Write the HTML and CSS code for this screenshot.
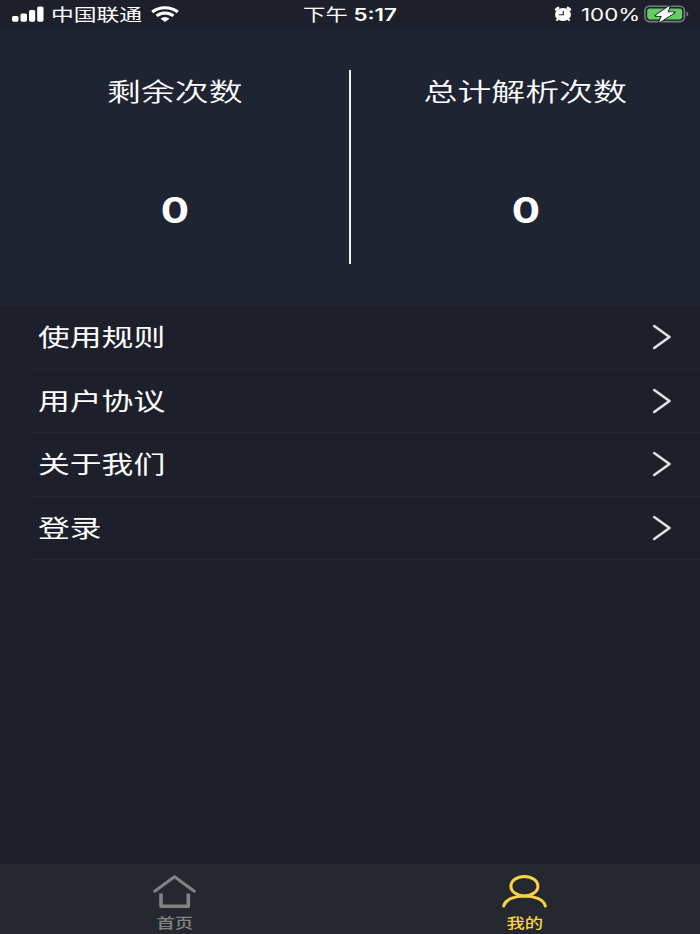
FILE: index.html
```html
<!DOCTYPE html>
<html lang="zh-CN">
<head>
  <meta charset="UTF-8">
  <meta name="viewport" content="width=device-width, initial-scale=1.0">
  <title>我的</title>
  <link rel="stylesheet" href="styles.css">
</head>
<body>
  <header class="status-bar">
    <div class="status-left">
      <svg class="signal" width="32" height="16" viewBox="0 0 32 16" fill="#fff">
        <rect x="0" y="10" width="6.5" height="5.7" rx="1.6"/>
        <rect x="8.5" y="7.5" width="6.5" height="8.2" rx="1.6"/>
        <rect x="17" y="4" width="6.2" height="11.7" rx="1.6"/>
        <rect x="25.2" y="0.5" width="6.3" height="15.2" rx="1.6"/>
      </svg>
      <span class="carrier">中国联通</span>
      <svg class="wifi" width="28" height="16" viewBox="0 0 28 16" fill="none" stroke="#fff" stroke-width="3.1">
        <path d="M1.2 6 C8.2 0.4 19.8 0.4 26.8 6"/>
        <path d="M5.6 9.9 C10.5 6 17.5 6 22.4 9.9"/>
        <path d="M9.5 12.7 Q14 9.4 18.5 12.7 L14 16 Z" fill="#fff" stroke="none"/>
      </svg>
    </div>
    <div class="time"><span class="period">下午</span> 5:17</div>
    <div class="status-right">
      <svg class="alarm" width="18" height="16" viewBox="0 0 18 16">
        <path d="M1.8 4.6 Q2.4 2.2 5.2 1.8 M16.2 4.6 Q15.6 2.2 12.8 1.8" fill="none" stroke="#fff" stroke-width="2.6"/>
        <path d="M4 12.5 L2.5 14.8 M14 12.5 L15.5 14.8" stroke="#fff" stroke-width="2"/>
        <ellipse cx="9" cy="8.5" rx="8" ry="6.5" fill="#fff"/>
        <path d="M9.3 4.8 V8.8 H4.9" fill="none" stroke="#1d202b" stroke-width="1.1"/>
      </svg>
      <span class="percent">100%</span>
      <svg class="battery" width="45" height="18" viewBox="0 0 45 18">
        <rect x="0.9" y="1.2" width="39.5" height="15.4" rx="4.6" fill="none" stroke="#777984" stroke-width="1.6"/>
        <path d="M42.4 6.4 Q44.4 7.2 44.4 9 Q44.4 10.8 42.4 11.6 Z" fill="#777984"/>
        <rect x="3.2" y="3.4" width="35" height="11" rx="2.8" fill="#62cd61"/>
        <path d="M25.8 0.8 L11.4 10.7 H18 L15 17.4 L30.4 7.4 H23.4 Z" fill="#fff" stroke="#1d202b" stroke-width="2" paint-order="stroke" stroke-linejoin="round"/>
        <path d="M24.6 2.2 L12.8 10.2 H19 L16.8 15.8 L29 7.9 H22.4 Z" fill="#fff" stroke="#fff" stroke-width="0.8" stroke-linejoin="round"/>
      </svg>
    </div>
  </header>

  <section class="summary">
    <div class="count">
      <span class="count-title">剩余次数</span>
      <span class="count-number">0</span>
    </div>
    <div class="divider"></div>
    <div class="count">
      <span class="count-title">总计解析次数</span>
      <span class="count-number">0</span>
    </div>
  </section>

  <main class="menu">
    <a class="menu-item" href="#">
      <span class="menu-text">使用规则</span>
      <svg class="arrow" width="20" height="26" viewBox="0 0 20 26"><path d="M2.2 2 L17.5 13 L2.2 24"/></svg>
    </a>
    <a class="menu-item" href="#">
      <span class="menu-text">用户协议</span>
      <svg class="arrow" width="20" height="26" viewBox="0 0 20 26"><path d="M2.2 2 L17.5 13 L2.2 24"/></svg>
    </a>
    <a class="menu-item" href="#">
      <span class="menu-text">关于我们</span>
      <svg class="arrow" width="20" height="26" viewBox="0 0 20 26"><path d="M2.2 2 L17.5 13 L2.2 24"/></svg>
    </a>
    <a class="menu-item" href="#">
      <span class="menu-text">登录</span>
      <svg class="arrow" width="20" height="26" viewBox="0 0 20 26"><path d="M2.2 2 L17.5 13 L2.2 24"/></svg>
    </a>
  </main>

  <nav class="tab-bar">
    <a class="tab" href="#">
      <svg width="48" height="36" viewBox="0 0 48 36" fill="none" stroke="#838383" stroke-width="3">
        <path d="M3.7 17.2 L23.5 2.8 L43.3 17.2" stroke-linecap="round" stroke-linejoin="round"/>
        <path d="M10 19.5 V32.2 H37.3 V19.5" stroke-width="3.6" stroke-linejoin="round"/>
      </svg>
      <span class="tab-text">首页</span>
    </a>
    <a class="tab active" href="#">
      <svg width="48" height="36" viewBox="0 0 48 36" fill="none" stroke="#f8d247" stroke-width="3" stroke-linecap="round">
        <ellipse cx="23.4" cy="12.2" rx="13.5" ry="9.7"/>
        <path d="M2.7 32 C6 18.6 41 18.6 44.3 32"/>
      </svg>
      <span class="tab-text">我的</span>
    </a>
  </nav>
</body>
</html>
```
FILE: styles.css
```css
body {
  margin: 0;
  height: 934px;
  display: flex;
  flex-direction: column;
  overflow: hidden;
  background-color: #1d202b;
  color: #fff;
  font-family: Inter, "Noto Sans CJK SC", sans-serif;
}

a {
  color: inherit;
  text-decoration: none;
}

svg {
  display: block;
  flex: none;
}

.status-bar {
  height: 28px;
  display: grid;
  grid-template-columns: 1fr 100px 1fr;
  align-items: center;
  line-height: 28px;
  white-space: nowrap;
}

.status-left,
.status-right {
  display: flex;
  align-items: center;
}

.status-left {
  padding-left: 12px;
}

/* wide lettering */
.carrier {
  width: 100px;
  margin-left: 7px;
  padding-top: 2px;
  font-size: 17px;
  line-height: 26px;
  transform: scaleX(1.34);
  transform-origin: left;
}

.time {
  padding-top: 2px;
  text-align: center;
  font-size: 16.8px;
  font-weight: 600;
  line-height: 26px;
  transform: scaleX(1.33);
}

.period {
  font-weight: 400;
}

.status-right {
  justify-content: flex-end;
  padding-right: 11px;
}

.percent {
  width: 57px;
  margin: 0 6px 0 9px;
  padding-top: 2px;
  font-size: 16.8px;
  line-height: 26px;
  transform: scaleX(1.33);
  transform-origin: left;
}

/* top counters */
.summary {
  height: 278px;
  display: flex;
  box-sizing: border-box;
  padding-top: 42px;
  background-color: #1f2433;
}

.count {
  flex: 1;
  display: flex;
  flex-direction: column;
  align-items: center;
}

.count-title {
  margin-top: 3px;
  font-size: 25.4px;
  line-height: 38px;
  font-weight: 350;
  transform: scaleX(1.335);
}

.count-number {
  margin-top: 75px;
  font-size: 35px;
  line-height: 48px;
  font-weight: 700;
  transform: scaleX(1.2);
}

.divider {
  width: 2px;
  height: 194px;
  background-color: #f1f1f1;
}

/* menu rows */
.menu {
  flex: 1;
  padding-left: 30px;
}

.menu-item {
  height: 63.6px;
  box-sizing: border-box;
  display: flex;
  align-items: center;
  justify-content: space-between;
  padding: 0 28px 0 8px;
  border-bottom: 1px solid #232631;
}

.menu-text {
  padding-top: 2px;
  font-size: 24px;
  line-height: 36px;
  transform: scaleX(1.325);
  transform-origin: left;
}

.arrow path {
  fill: none;
  stroke: #e2e2e4;
  stroke-width: 2.6;
  stroke-linecap: round;
  stroke-linejoin: round;
}

/* bottom tabs */
.tab-bar {
  height: 70px;
  box-sizing: border-box;
  display: flex;
  border-top: 1px solid #292b34;
  background-color: #262830;
}

.tab {
  flex: 1;
  display: flex;
  flex-direction: column;
  align-items: center;
  padding-top: 9px;
  color: #838383;
}

.tab-text {
  margin-top: 3px;
  font-size: 13.8px;
  line-height: 20px;
  font-weight: 500;
  transform: scaleX(1.33);
}

.active {
  color: #f8d247;
}
```
